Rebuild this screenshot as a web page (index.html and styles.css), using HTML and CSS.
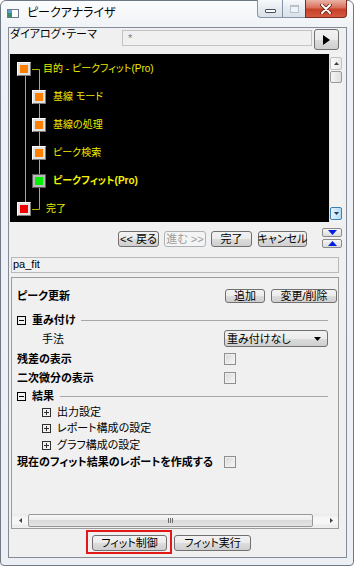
FILE: index.html
```html
<!DOCTYPE html>
<html lang="ja">
<head>
<meta charset="utf-8">
<title>ピークアナライザ</title>
<link rel="stylesheet" href="styles.css">
</head>
<body>
<div class="window">
  <div class="titlebar">
    <svg class="app-icon" width="12" height="9" viewBox="0 0 12 9">
      <rect x="0.5" y="0.5" width="11" height="8" fill="#ffffff" stroke="#6a7a8c"/>
      <rect x="1" y="1" width="4" height="7" fill="#3c8c6c"/>
      <rect x="1" y="1" width="4" height="3" fill="#5aa0d0"/>
    </svg>
    <span class="title">ピークアナライザ</span>
    <div class="caption">
      <div class="cap cap-min"><span class="g-min"></span></div>
      <div class="cap cap-max"><span class="g-max"></span></div>
      <div class="cap cap-close">
        <svg width="12" height="10" viewBox="0 0 12 10">
          <path d="M2 1 L10 9 M10 1 L2 9" stroke="#5b1f14" stroke-width="3.6" stroke-linecap="round"/>
          <path d="M2 1 L10 9 M10 1 L2 9" stroke="#ffffff" stroke-width="2" stroke-linecap="round"/>
        </svg>
      </div>
    </div>
  </div>

  <div class="client">
    <div class="theme-row">
      <span class="theme-label">ダイアログ・テーマ</span>
      <div class="theme-field">*</div>
      <button class="btn btn-play">
        <svg width="7" height="10" viewBox="0 0 7 10"><path d="M0 0 L7 5 L0 10 Z" fill="#000"/></svg>
      </button>
    </div>

    <div class="flow-area">
      <div class="tree">
        <svg class="tree-lines" width="319" height="168" viewBox="0 0 319 168">
          <path d="M15.5 22 V148 M22 15.5 H29.5 V155.5 H22" fill="none" stroke="#b8b800" stroke-width="1"/>
        </svg>
        <div class="tree-row lvl0 first"><span class="node"><i class="orange"></i></span><span class="tlabel">目的 - ピークフィット(Pro)</span></div>
        <div class="tree-row lvl1"><span class="node"><i class="orange"></i></span><span class="tlabel">基線 モード</span></div>
        <div class="tree-row lvl1"><span class="node"><i class="orange"></i></span><span class="tlabel">基線の処理</span></div>
        <div class="tree-row lvl1"><span class="node"><i class="orange"></i></span><span class="tlabel">ピーク検索</span></div>
        <div class="tree-row lvl1 active"><span class="node sel"><i class="green"></i></span><span class="tlabel">ピークフィット(Pro)</span></div>
        <div class="tree-row lvl0 last"><span class="node"><i class="red"></i></span><span class="tlabel">完了</span></div>
      </div>
      <div class="vscroll">
        <div class="sb-btn">
          <svg width="5" height="3" viewBox="0 0 5 3"><path d="M0 3 L2.5 0 L5 3 Z" fill="#404040"/></svg>
        </div>
        <div class="sb-thumb"></div>
        <div class="sb-track"></div>
        <div class="sb-btn hot">
          <svg width="5" height="3" viewBox="0 0 5 3"><path d="M0 0 L5 0 L2.5 3 Z" fill="#1c3a5c"/></svg>
        </div>
      </div>
    </div>

    <div class="nav-row">
      <button class="btn nav-back">&lt;&lt; 戻る</button>
      <button class="btn nav-next disabled">進む &gt;&gt;</button>
      <button class="btn nav-done">完了</button>
      <button class="btn nav-cancel">キャンセル</button>
      <div class="updown">
        <button class="mini">
          <svg width="9" height="5" viewBox="0 0 9 5"><path d="M0 0 L9 0 L4.5 5 Z" fill="#0020e0"/></svg>
        </button>
        <button class="mini">
          <svg width="9" height="5" viewBox="0 0 9 5"><path d="M0 5 L9 5 L4.5 0 Z" fill="#0020e0"/></svg>
        </button>
      </div>
    </div>

    <div class="name-field">pa_fit</div>

    <div class="grid-panel">
      <div class="prop-rows">
        <div class="prop-row row-peak">
          <span class="prop-label strong">ピーク更新</span>
          <button class="btn btn-add">追加</button>
          <button class="btn btn-edit">変更/削除</button>
        </div>
        <div class="prop-row row-weight">
          <svg class="exp" width="9" height="9" viewBox="0 0 9 9"><rect x="0.5" y="0.5" width="8" height="8" fill="none" stroke="#000"/><path d="M2 4.5 H7" stroke="#000"/></svg>
          <span class="section-title">重み付け</span>
          <span class="section-rule"></span>
        </div>
        <div class="prop-row row-method">
          <span class="prop-label sub">手法</span>
          <div class="combo">
            <span class="combo-text">重み付けなし</span>
            <svg width="7" height="4" viewBox="0 0 7 4"><path d="M0 0 L7 0 L3.5 4 Z" fill="#000"/></svg>
          </div>
        </div>
        <div class="prop-row row-resid">
          <span class="prop-label strong">残差の表示</span>
          <span class="chk"></span>
        </div>
        <div class="prop-row row-deriv">
          <span class="prop-label strong">二次微分の表示</span>
          <span class="chk"></span>
        </div>
        <div class="prop-row row-result">
          <svg class="exp" width="9" height="9" viewBox="0 0 9 9"><rect x="0.5" y="0.5" width="8" height="8" fill="none" stroke="#000"/><path d="M2 4.5 H7" stroke="#000"/></svg>
          <span class="section-title">結果</span>
          <span class="section-rule"></span>
        </div>
        <div class="prop-row sub-item row-out">
          <svg class="exp" width="9" height="9" viewBox="0 0 9 9"><rect x="0.5" y="0.5" width="8" height="8" fill="none" stroke="#303030"/><path d="M2 4.5 H7 M4.5 2 V7" stroke="#303030"/></svg>
          <span class="sub-text">出力設定</span>
        </div>
        <div class="prop-row sub-item row-report">
          <svg class="exp" width="9" height="9" viewBox="0 0 9 9"><rect x="0.5" y="0.5" width="8" height="8" fill="none" stroke="#303030"/><path d="M2 4.5 H7 M4.5 2 V7" stroke="#303030"/></svg>
          <span class="sub-text">レポート構成の設定</span>
        </div>
        <div class="prop-row sub-item row-graph">
          <svg class="exp" width="9" height="9" viewBox="0 0 9 9"><rect x="0.5" y="0.5" width="8" height="8" fill="none" stroke="#303030"/><path d="M2 4.5 H7 M4.5 2 V7" stroke="#303030"/></svg>
          <span class="sub-text">グラフ構成の設定</span>
        </div>
        <div class="prop-row row-create">
          <span class="prop-label strong">現在のフィット結果のレポートを作成する</span>
          <span class="chk"></span>
        </div>
      </div>
      <div class="hscroll">
        <div class="hs-btn left">
          <svg width="3" height="5" viewBox="0 0 3 5"><path d="M3 0 L0 2.5 L3 5 Z" fill="#404040"/></svg>
        </div>
        <div class="hs-thumb">
          <span class="grip"></span>
        </div>
        <div class="hs-track"></div>
        <div class="hs-btn right">
          <svg width="3" height="5" viewBox="0 0 3 5"><path d="M0 0 L3 2.5 L0 5 Z" fill="#404040"/></svg>
        </div>
      </div>
    </div>

    <div class="bottom-row">
      <div class="focus-ring"><button class="btn btn-fit">フィット制御</button></div>
      <button class="btn btn-run">フィット実行</button>
    </div>
  </div>
</div>
</body>
</html>
```

FILE: styles.css
```css
* { box-sizing: border-box; }

html, body { margin: 0; padding: 0; }

body {
  width: 354px;
  height: 566px;
  overflow: hidden;
  background: #ffffff;
  font-family: "Liberation Sans", "Noto Sans CJK JP", sans-serif;
  font-size: 11px;
  color: #000;
  font-feature-settings: "palt";
}

button { font: inherit; color: inherit; }

/* ---------- window frame ---------- */
.window {
  width: 354px;
  height: 566px;
  border: 1px solid #6f7986;
  border-radius: 6px 6px 4px 4px;
  background: linear-gradient(#fbfcfd, #eef1f5 30px, #eceff3);
  padding: 0 6px 7px 7px;
  display: flex;
  flex-direction: column;
}

.titlebar {
  height: 26px;
  display: flex;
  align-items: flex-start;
  flex: none;
}

.app-icon { margin: 8px 0 0 -1px; flex: none; }

.title {
  margin: 4px 0 0 8px;
  font-size: 12px;
  line-height: 16px;
  color: #000;
}

.caption {
  margin-left: auto;
  margin-top: -1px;
  display: flex;
  height: 18px;
}

.cap {
  height: 18px;
  display: flex;
  align-items: center;
  justify-content: center;
  border: 1px solid #8794a6;
  border-top: none;
}

.cap-min {
  width: 25px;
  border-radius: 0 0 0 4px;
  border-right: none;
  background: linear-gradient(#f7f9fb, #e6ebf1 50%, #d9e0e8);
}

.cap-max {
  width: 23px;
  border-right: none;
  background: linear-gradient(#f7f9fb, #e6ebf1 50%, #d9e0e8);
}

.cap-close {
  width: 42px;
  border-color: #7e2a1e;
  border-radius: 0 0 4px 0;
  background: linear-gradient(#eab3a6, #d9705c 45%, #c8412a 55%, #d35a3e);
}

.g-min {
  width: 11px;
  height: 4px;
  margin-top: 5px;
  border: 1px solid #47505c;
  border-radius: 1px;
  background: #fff;
}

.g-max {
  width: 9px;
  height: 8px;
  border: 1px solid #b6bfca;
  border-top-width: 2px;
  background: #f1f4f7;
}

/* ---------- client area ---------- */
.client {
  flex: 1;
  border: 1px solid #848c97;
  background: #f0f0f0;
  padding: 0 4px 0 1px;
  display: flex;
  flex-direction: column;
}

.btn {
  height: 16px;
  padding: 0;
  border: 1px solid #707070;
  border-radius: 3px;
  background: linear-gradient(#f2f2f2, #ebebeb 50%, #dddddd 50%, #cfcfcf);
  display: flex;
  align-items: center;
  justify-content: center;
  line-height: 14px;
  white-space: nowrap;
  flex: none;
}

.btn.disabled {
  color: #9c9c9c;
  border-color: #adb2b5;
  background: #f4f4f4;
}

/* theme row */
.theme-row {
  margin-top: 1px;
  height: 21px;
  display: flex;
  align-items: flex-start;
  flex: none;
}

.theme-label {
  width: 112px;
  flex: none;
  margin-top: -2px;
  line-height: 14px;
}

.theme-field {
  width: 190px;
  height: 16px;
  margin-top: 1px;
  border: 1px solid #c3c3c3;
  background: #f0f0f0;
  color: #7c7c7c;
  padding-left: 5px;
  line-height: 15px;
  font-size: 11px;
}

.btn-play {
  width: 25px;
  height: 21px;
  margin-left: 2px;
}

/* black flow area */
.flow-area {
  margin-top: 4px;
  height: 168px;
  display: flex;
  flex: none;
}

.tree {
  width: 319px;
  background: #000;
  position: relative;
  padding-top: 1px;
}

.tree-lines {
  position: absolute;
  left: 0;
  top: 0;
}

.tree-row {
  position: relative;
  height: 28px;
  display: flex;
  align-items: center;
}

.tree-row.lvl0 { padding-left: 7px; }
.tree-row.lvl1 { padding-left: 22px; }

.tlabel {
  color: #ecec00;
  font-size: 10px;
  line-height: 12px;
  white-space: nowrap;
  margin-left: 7px;
}

.tree-row.first .tlabel { margin-left: 12px; }
.tree-row.last .tlabel { margin-left: 15px; }
.tree-row.active .tlabel { font-weight: bold; color: #f4f400; }

.node {
  width: 14px;
  height: 14px;
  flex: none;
  border: 1px solid;
  border-color: #ffffff #7a7a7a #7a7a7a #ffffff;
  background: #e2e2e2;
  padding: 2px;
}

.node.sel {
  border-color: #5a5a5a;
  background: #b8b8b8;
}

.node i { display: block; width: 8px; height: 8px; }
.node i.orange { background: #ff8000; }
.node i.green { background: #00f000; }
.node i.red { background: #f00000; }

/* vertical scrollbar */
.vscroll {
  width: 13px;
  background: #f2f2f2;
  border-left: 1px solid #e4e4e4;
  display: flex;
  flex-direction: column;
  padding: 3px 0 2px;
}

.sb-btn {
  height: 13px;
  border: 1px solid #c2c2c2;
  border-radius: 2px;
  background: linear-gradient(90deg, #fbfbfb, #e8e8e8);
  display: flex;
  align-items: center;
  justify-content: center;
  flex: none;
}

.sb-btn.hot {
  border-color: #3c7fb1;
  background: linear-gradient(90deg, #e5f4fc, #b3dcf6);
}

.sb-thumb {
  height: 12px;
  margin-top: 1px;
  border: 1px solid #9a9a9a;
  border-radius: 2px;
  background: linear-gradient(90deg, #f6f6f6, #dedede);
  flex: none;
}

.sb-track { flex: 1; }

/* nav row */
.nav-row {
  margin-top: 6px;
  height: 20px;
  display: flex;
  align-items: flex-start;
  flex: none;
}

.nav-row > .btn { margin-top: 3px; }
.nav-back { width: 41px; margin-left: 108px; }
.nav-next { width: 42px; margin-left: 5px; }
.nav-done { width: 41px; margin-left: 5px; }
.nav-cancel { width: 49px; margin-left: 6px; }

.updown {
  margin-left: auto;
  width: 20px;
  display: flex;
  flex-direction: column;
  gap: 2px;
}

.mini {
  height: 9px;
  padding: 0;
  border: 1px solid #8a8a8a;
  border-radius: 2px;
  background: linear-gradient(#f6f6f6, #dcdcdc);
  display: flex;
  align-items: center;
  justify-content: center;
}

/* name field */
.name-field {
  margin: 9px 3px 0 1px;
  height: 16px;
  border: 1px solid #b9b9b9;
  background: #f0f0f0;
  padding-left: 1px;
  line-height: 13px;
  font-size: 11px;
  flex: none;
}

/* property grid */
.grid-panel {
  margin: 4px 3px 0 1px;
  height: 252px;
  border: 1px solid #9c9c9c;
  display: flex;
  flex-direction: column;
  flex: none;
}

.prop-rows {
  padding: 9px 0 0 5px;
  display: flex;
  flex-direction: column;
}

.prop-row {
  display: flex;
  align-items: center;
  line-height: 14px;
  white-space: nowrap;
}

.prop-label {
  min-width: 207px;
  flex: none;
}

.prop-label.strong { font-weight: bold; }
.prop-label.sub { padding-left: 25px; }

.row-peak { height: 18px; }
.row-weight { height: 16px; margin-top: 7px; }
.row-method { height: 19px; margin-top: 1px; }
.row-resid { height: 18px; margin-top: 2px; }
.row-deriv { height: 18px; margin-top: 1px; }
.row-result { height: 16px; margin-top: 1px; }
.row-out { height: 16px; }
.row-report { height: 16px; }
.row-graph { height: 16px; margin-top: 1px; }
.row-create { height: 18px; }

.btn-add { width: 40px; height: 14px; margin-left: 1px; line-height: 12px; }
.btn-edit { width: 66px; height: 14px; margin-left: 6px; line-height: 12px; }

.exp { flex: none; }

.section-title {
  font-weight: bold;
  margin-left: 6px;
}

.section-rule {
  flex: 1;
  height: 1px;
  background: #a8a8a8;
  margin: 0 10px 0 6px;
}

.sub-item { padding-left: 25px; }
.sub-text { margin-left: 6px; }

.combo {
  width: 104px;
  height: 17px;
  border: 1px solid #707070;
  border-radius: 3px;
  background: linear-gradient(#f2f2f2, #ebebeb 50%, #dddddd 50%, #cfcfcf);
  display: flex;
  align-items: center;
  padding: 0 6px 0 2px;
}

.combo-text { flex: 1; }

.chk {
  width: 12px;
  height: 12px;
  flex: none;
  border: 1px solid #8e8f8f;
  background: linear-gradient(135deg, #d6d6d6, #f9f9f9);
  box-shadow: inset 0 0 0 1px #f0f0f0;
}

.row-create .prop-label { min-width: 207px; margin-right: 0; }
.row-create .chk { margin-left: auto; }
.row-create { padding-right: 102px; }

/* horizontal scrollbar */
.hscroll {
  margin-top: auto;
  margin-bottom: 1px;
  height: 13px;
  display: flex;
  background: linear-gradient(#e9e9e9, #f6f6f6 30%, #f6f6f6 70%, #e9e9e9);
  flex: none;
}

.hs-btn {
  display: flex;
  align-items: center;
  justify-content: center;
  flex: none;
}

.hs-btn.left { width: 16px; }
.hs-btn.right { width: 13px; }

.hs-thumb {
  width: 285px;
  border: 1px solid #979797;
  border-radius: 2px;
  background: linear-gradient(#f7f7f7, #ececec 50%, #dadada 50%, #e4e4e4);
  display: flex;
  align-items: center;
  justify-content: center;
  flex: none;
}

.grip {
  width: 5px;
  height: 5px;
  background: repeating-linear-gradient(90deg, #6a6a6a 0 1px, transparent 1px 2px);
}

.hs-track { flex: 1; }

/* bottom row */
.bottom-row {
  height: 28px;
  display: flex;
  align-items: flex-start;
  padding-left: 76px;
  flex: none;
}

.focus-ring {
  margin-top: 1px;
  width: 86px;
  height: 24px;
  border: 2px solid #e01818;
  padding: 3px 0 0 4px;
}

.btn-fit { width: 75px; }
.btn-run { width: 77px; margin-left: 2px; margin-top: 6px; }
```
